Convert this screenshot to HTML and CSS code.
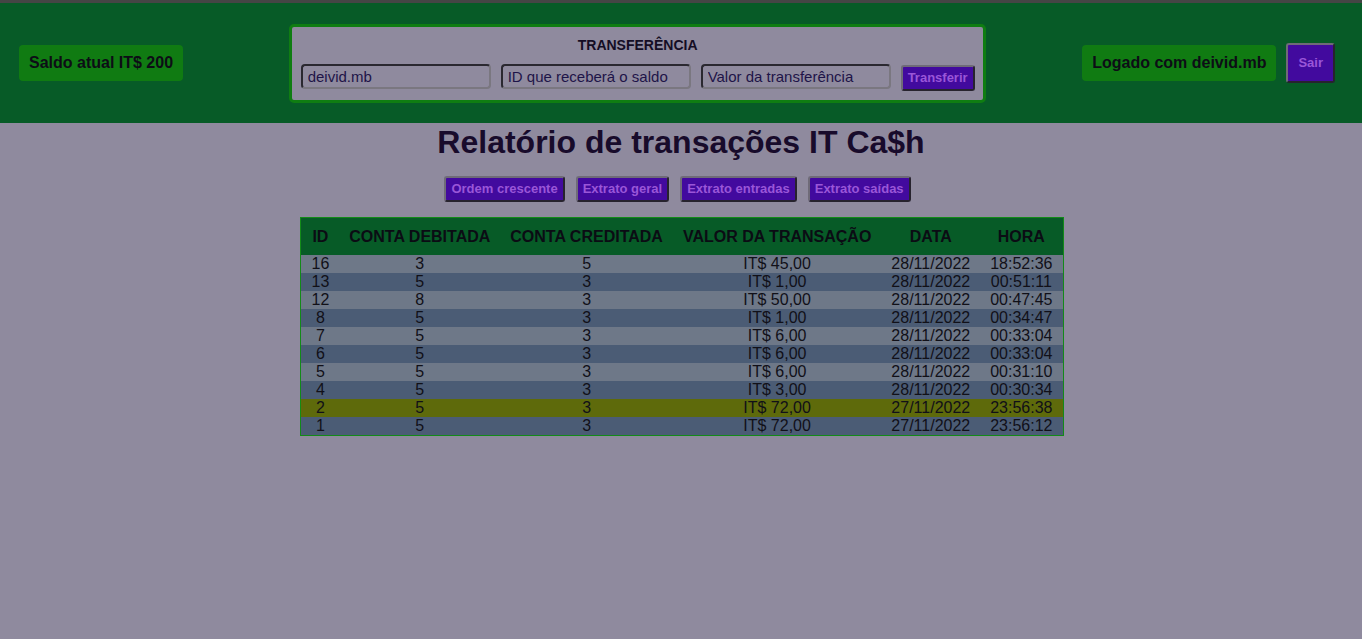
FILE: index.html
```html
<!DOCTYPE html>
<html lang="pt-BR">
<head>
<meta charset="utf-8">
<title>IT Ca$h</title>
<link rel="stylesheet" href="styles.css">
</head>
<body>
<header class="topbar">
  <div class="pill">Saldo atual IT$ 200</div>
  <form class="transfer">
    <div class="transfer-title">TRANSFERÊNCIA</div>
    <div class="transfer-row">
      <input class="field" type="text" value="deivid.mb">
      <input class="field" type="text" placeholder="ID que receberá o saldo">
      <input class="field" type="text" placeholder="Valor da transferência">
      <button class="btn" type="button">Transferir</button>
    </div>
  </form>
  <div class="user">
    <div class="pill">Logado com deivid.mb</div>
    <button class="btn btn-big" type="button">Sair</button>
  </div>
</header>
<main class="content">
  <h1 class="title">Relatório de transações IT Ca$h</h1>
  <div class="filters">
    <button class="btn" type="button">Ordem crescente</button>
    <button class="btn" type="button">Extrato geral</button>
    <button class="btn" type="button">Extrato entradas</button>
    <button class="btn" type="button">Extrato saídas</button>
  </div>
  <table class="report">
    <thead>
      <tr><th>ID</th><th>CONTA DEBITADA</th><th>CONTA CREDITADA</th><th>VALOR DA TRANSAÇÃO</th><th>DATA</th><th>HORA</th></tr>
    </thead>
    <tbody>
      <tr><td>16</td><td>3</td><td>5</td><td>IT$ 45,00</td><td>28/11/2022</td><td>18:52:36</td></tr>
      <tr><td>13</td><td>5</td><td>3</td><td>IT$ 1,00</td><td>28/11/2022</td><td>00:51:11</td></tr>
      <tr><td>12</td><td>8</td><td>3</td><td>IT$ 50,00</td><td>28/11/2022</td><td>00:47:45</td></tr>
      <tr><td>8</td><td>5</td><td>3</td><td>IT$ 1,00</td><td>28/11/2022</td><td>00:34:47</td></tr>
      <tr><td>7</td><td>5</td><td>3</td><td>IT$ 6,00</td><td>28/11/2022</td><td>00:33:04</td></tr>
      <tr><td>6</td><td>5</td><td>3</td><td>IT$ 6,00</td><td>28/11/2022</td><td>00:33:04</td></tr>
      <tr><td>5</td><td>5</td><td>3</td><td>IT$ 6,00</td><td>28/11/2022</td><td>00:31:10</td></tr>
      <tr><td>4</td><td>5</td><td>3</td><td>IT$ 3,00</td><td>28/11/2022</td><td>00:30:34</td></tr>
      <tr class="hover"><td>2</td><td>5</td><td>3</td><td>IT$ 72,00</td><td>27/11/2022</td><td>23:56:38</td></tr>
      <tr><td>1</td><td>5</td><td>3</td><td>IT$ 72,00</td><td>27/11/2022</td><td>23:56:12</td></tr>
    </tbody>
  </table>
</main>
</body>
</html>
```
FILE: styles.css
```css
* { box-sizing: border-box; }
html, body {
  margin: 0;
  padding: 0;
  background: #8f8a9e;
  font-family: "Liberation Sans", Arial, sans-serif;
  color: #12101c;
}
body { border-top: 3px solid #454545; min-height: 639px; }

.topbar {
  height: 120px;
  background: #075b27;
  display: flex;
  align-items: center;
  justify-content: space-between;
  padding: 0 27px 0 19px;
}
.pill {
  background: #107b12;
  border-radius: 4px;
  padding: 9px 10px;
  font-weight: bold;
  font-size: 16px;
  line-height: 18px;
  color: #0d0d16;
}
.transfer {
  margin: 0 0 0 9px;
  width: 697px;
  border: 3px solid #0f7d12;
  border-radius: 5px;
  background: #8f8a9e;
  padding: 10px 8px 9px 9px;
  display: flex;
  flex-direction: column;
  align-items: center;
}
.transfer-title {
  font-weight: bold;
  font-size: 14px;
  line-height: 16px;
  color: #140d24;
  margin-bottom: 11px;
}
.transfer-row {
  display: flex;
  gap: 10px;
  align-items: flex-start;
}
.field {
  width: 190px;
  height: 25px;
  background: transparent;
  border: 2px solid #7a7780;
  border-top-color: #2a2830;
  border-left-color: #2a2830;
  border-radius: 4px;
  padding: 1px 5px;
  font-family: "Liberation Sans", Arial, sans-serif;
  font-size: 15px;
  color: #1e1448;
}
.field::placeholder { color: #1e1448; opacity: 1; }
.btn {
  background: #420a9e;
  color: #9a56d8;
  font-family: "Liberation Sans", Arial, sans-serif;
  font-weight: bold;
  font-size: 13px;
  line-height: 15px;
  padding: 3px 5px 4px;
  border: 2px solid #27232e;
  border-top-color: #6f6b78;
  border-left-color: #6f6b78;
  border-radius: 3px;
  margin-top: 1px;
}
.btn-big {
  padding: 10px 10px 11px;
  margin: 0;
}
.user {
  display: flex;
  align-items: center;
  gap: 10px;
}

.content {
  display: flex;
  flex-direction: column;
  align-items: center;
}
.title {
  margin: 0;
  font-size: 32px;
  line-height: 38px;
  font-weight: bold;
  color: #180b2b;
}
.filters {
  display: flex;
  gap: 11px;
  margin-top: 15px;
  margin-right: 7px;
}
.filters .btn { margin: 0; }

.report {
  margin-top: 15px;
  margin-left: 2px;
  border-collapse: collapse;
  border: 1px solid #138a18;
  font-size: 16px;
  color: #111018;
}
.report th {
  background: #075b27;
  font-weight: bold;
  padding: 10px 10px 9px;
  line-height: 18px;
  color: #0b0c14;
}
.report td {
  text-align: center;
  padding: 0 10px;
  line-height: 18px;
  background: #6e7888;
}
.report tbody tr:nth-child(even) td { background: #4b5c75; }
.report tbody tr.hover td { background: #5e6a0b; }
```
